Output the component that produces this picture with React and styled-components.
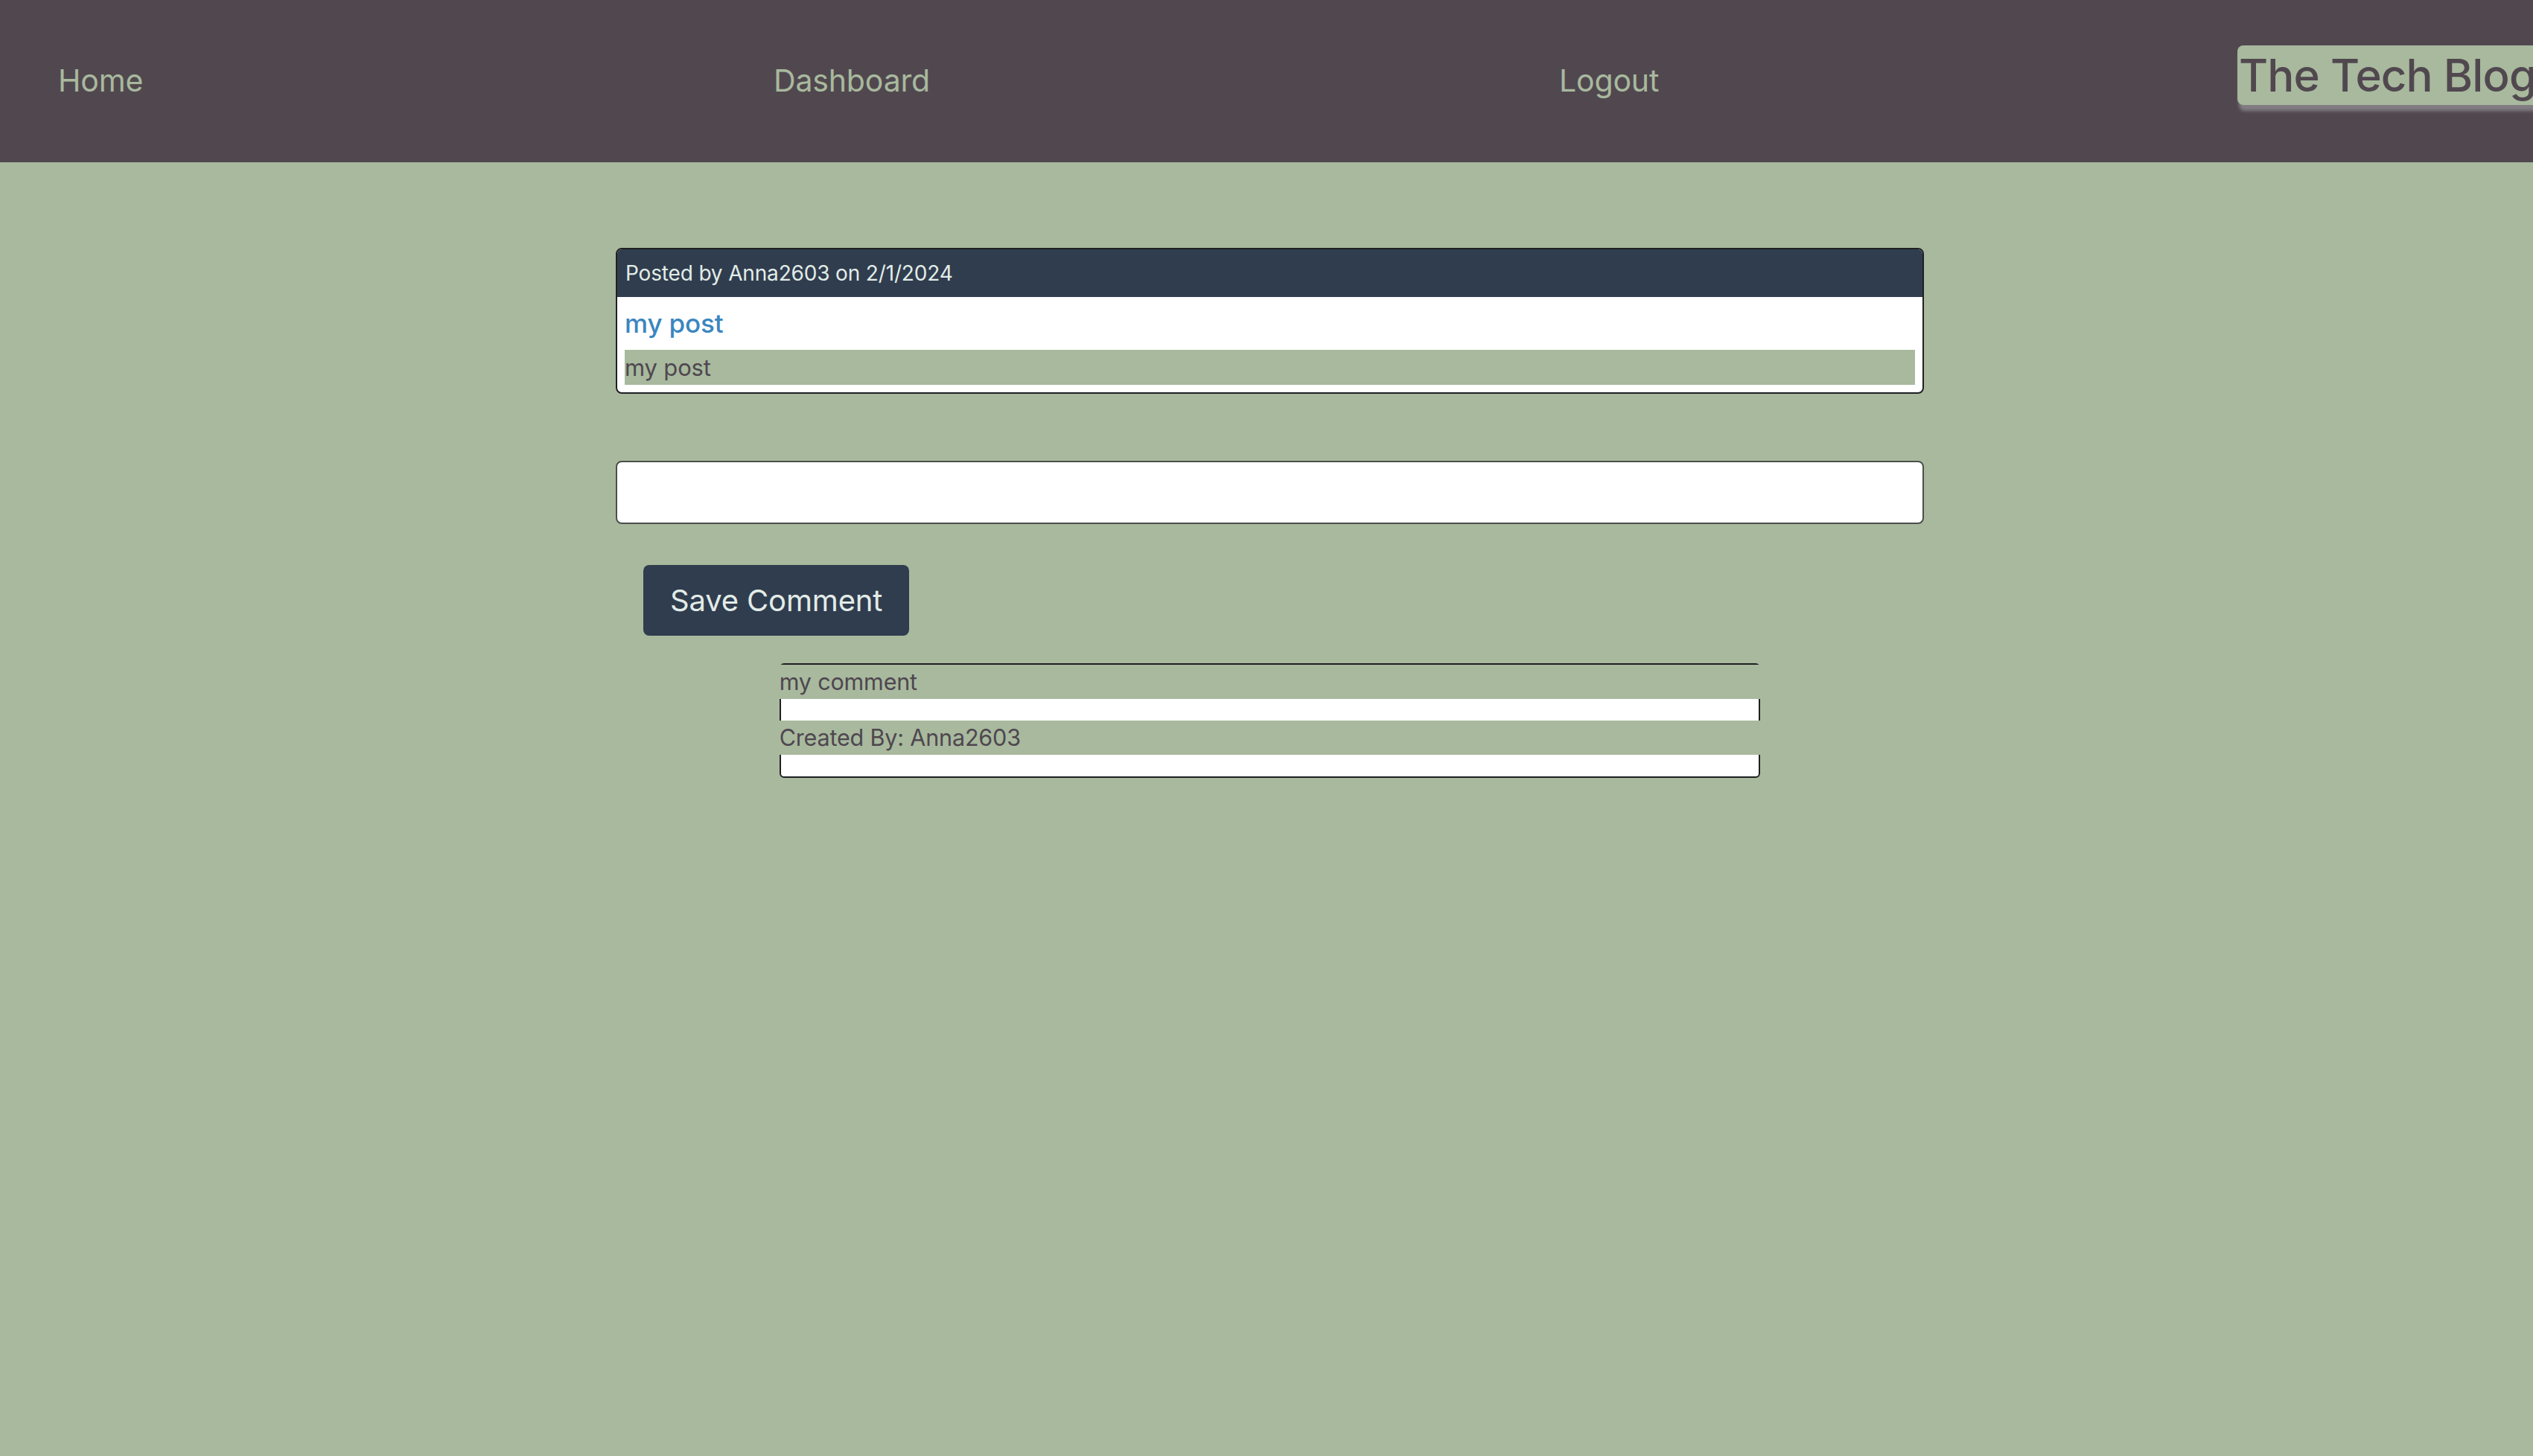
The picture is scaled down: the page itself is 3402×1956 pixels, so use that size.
import React from "react";
import styled, { createGlobalStyle } from "styled-components";

const GlobalStyle = createGlobalStyle`
  html, body {
    margin: 0;
    padding: 0;
    background: #a8b99e;
    font-family: Inter, "Noto Sans", "Liberation Sans", sans-serif;
    letter-spacing: -0.01em;
  }
  * { box-sizing: border-box; }
`;

const Header = styled.header`
  height: 218px;
  background: #51484f;
  display: grid;
  grid-template-columns: 961px 1055px 911px 1fr;
  align-items: center;
  padding-left: 78px;
  overflow: hidden;
`;

const NavLink = styled.a`
  color: #a8b99e;
  font-size: 41px;
  text-decoration: none;
  line-height: 1;
  margin-bottom: 2px;
`;

const Brand = styled.h1`
  margin: 0 0 17px 0;
  justify-self: start;
  white-space: nowrap;
  background: #a8b99e;
  color: #51484f;
  font-size: 60px;
  font-weight: 500;
  letter-spacing: -0.015em;
  line-height: 80px;
  padding: 0 40px 0 2px;
  border-radius: 8px 0 0 8px;
  box-shadow: 2px 8px 4px rgba(170, 170, 175, 0.55);
`;

const Main = styled.main`
  width: 1757px;
  margin: 115px 0 0 827px;
  display: flex;
  flex-direction: column;
`;

const Card = styled.article`
  border: 2px solid #1f1f22;
  border-radius: 8px;
  background: #ffffff;
  overflow: hidden;
`;

const CardHeader = styled.div`
  background: #303d4e;
  color: #e2ece8;
  font-size: 28px;
  line-height: 42px;
  padding: 11px;
`;

const CardBody = styled.div`
  padding: 0 10px 10px;
`;

const PostTitle = styled.a`
  display: block;
  color: #3b86c0;
  font-size: 35px;
  font-weight: 500;
  line-height: 54px;
  margin: 8px 0 9px;
  text-decoration: none;
`;

const PostText = styled.p`
  margin: 0;
  background: #a8b99e;
  color: #4f474f;
  font-size: 31px;
  line-height: 47px;
`;

const CommentInput = styled.textarea`
  margin-top: 90px;
  height: 85px;
  width: 100%;
  border: 2px solid #4b4f4b;
  border-radius: 8px;
  background: #ffffff;
  resize: none;
  font: inherit;
`;

const SaveButton = styled.button`
  align-self: flex-start;
  margin: 55px 0 0 37px;
  height: 95px;
  padding: 0 36px;
  background: #303d4e;
  color: #e2ece8;
  border: none;
  border-radius: 8px;
  font-family: inherit;
  letter-spacing: inherit;
  font-size: 40px;
  line-height: 1;
`;

const CommentBox = styled.section`
  width: 75%;
  margin: 37px auto 0;
  border: 2px solid #1f1f22;
  border-radius: 6px;
  background: #ffffff;
`;

const CommentRow = styled.p`
  margin: 0 -2px 29px;
  background: #a8b99e;
  color: #4f474f;
  font-size: 30.5px;
  line-height: 46px;
`;

export default function App() {
  return (
    <>
      <GlobalStyle />
      <Header>
        <NavLink href="#">Home</NavLink>
        <NavLink href="#">Dashboard</NavLink>
        <NavLink href="#">Logout</NavLink>
        <Brand>The Tech Blog</Brand>
      </Header>
      <Main>
        <Card>
          <CardHeader>Posted by Anna2603 on 2/1/2024</CardHeader>
          <CardBody>
            <PostTitle href="#">my post</PostTitle>
            <PostText>my post</PostText>
          </CardBody>
        </Card>
        <CommentInput />
        <SaveButton>Save Comment</SaveButton>
        <CommentBox>
          <CommentRow>my comment</CommentRow>
          <CommentRow>Created By: Anna2603</CommentRow>
        </CommentBox>
      </Main>
    </>
  );
}
